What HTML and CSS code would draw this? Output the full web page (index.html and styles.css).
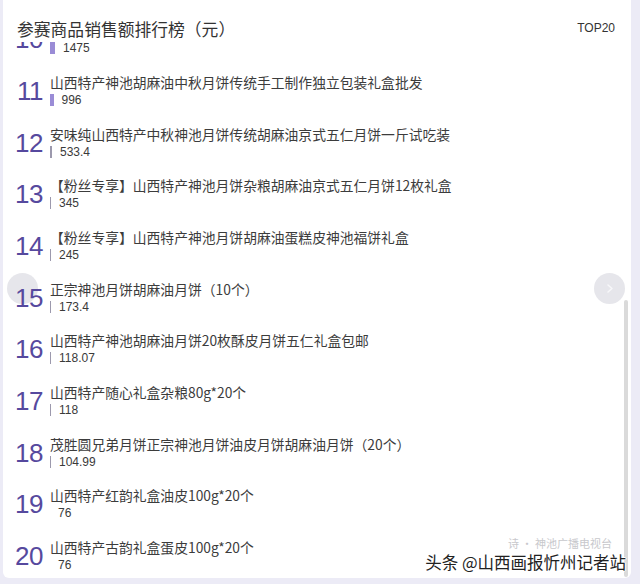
FILE: index.html
```html
<!DOCTYPE html>
<html lang="zh">
<head>
<meta charset="utf-8">
<title>参赛商品销售额排行榜</title>
<link rel="stylesheet" href="styles.css">
</head>
<body>
<div class="card">
  <div class="header">
    <div class="title">参赛商品销售额排行榜（元）</div>
    <div class="top">TOP20</div>
  </div>

  <div class="nav nav-left"></div>

  <div class="list">
    <div class="row"><div class="rank">10</div><div class="info"><div class="name">山西特产神池月饼胡麻油传统手工制作礼盒装</div><div class="val"><span class="bar" style="width:5px"></span>1475</div></div></div>
    <div class="row"><div class="rank">11</div><div class="info"><div class="name">山西特产神池胡麻油中秋月饼传统手工制作独立包装礼盒批发</div><div class="val"><span class="bar" style="width:3.5px"></span>996</div></div></div>
    <div class="row"><div class="rank">12</div><div class="info"><div class="name">安味纯山西特产中秋神池月饼传统胡麻油京式五仁月饼一斤试吃装</div><div class="val"><span class="bar thin" style="width:2px"></span>533.4</div></div></div>
    <div class="row"><div class="rank">13</div><div class="info"><div class="name">【粉丝专享】山西特产神池月饼杂粮胡麻油京式五仁月饼12枚礼盒</div><div class="val"><span class="bar thin" style="width:1px"></span>345</div></div></div>
    <div class="row"><div class="rank">14</div><div class="info"><div class="name">【粉丝专享】山西特产神池月饼胡麻油蛋糕皮神池福饼礼盒</div><div class="val"><span class="bar thin" style="width:1px"></span>245</div></div></div>
    <div class="row"><div class="rank">15</div><div class="info"><div class="name">正宗神池月饼胡麻油月饼（10个）</div><div class="val"><span class="bar thin" style="width:1px"></span>173.4</div></div></div>
    <div class="row"><div class="rank">16</div><div class="info"><div class="name">山西特产神池胡麻油月饼20枚酥皮月饼五仁礼盒包邮</div><div class="val"><span class="bar thin" style="width:1px"></span>118.07</div></div></div>
    <div class="row"><div class="rank">17</div><div class="info"><div class="name">山西特产随心礼盒杂粮80g*20个</div><div class="val"><span class="bar thin" style="width:1px"></span>118</div></div></div>
    <div class="row"><div class="rank">18</div><div class="info"><div class="name">茂胜圆兄弟月饼正宗神池月饼油皮月饼胡麻油月饼（20个）</div><div class="val"><span class="bar thin" style="width:1px"></span>104.99</div></div></div>
    <div class="row"><div class="rank">19</div><div class="info"><div class="name">山西特产红韵礼盒油皮100g*20个</div><div class="val"><span class="bar" style="width:0"></span>76</div></div></div>
    <div class="row"><div class="rank">20</div><div class="info"><div class="name">山西特产古韵礼盒蛋皮100g*20个</div><div class="val"><span class="bar" style="width:0"></span>76</div></div></div>
  </div>

  <div class="nav nav-right">
    <svg width="31" height="31" viewBox="0 0 31 31"><path d="M14 12 L18 15.5 L14 19" fill="none" stroke="#f7f7f9" stroke-width="1.6" stroke-linecap="round" stroke-linejoin="round"/></svg>
  </div>

  <div class="thumb"></div>

  <div class="mark">
    <span class="mark-faint">诗 · 神池广播电视台</span>
    <span class="mark-main">头条 @山西画报忻州记者站</span>
  </div>
</div>
</body>
</html>
```

FILE: styles.css
```css
html, body {
  margin: 0;
  padding: 0;
}

body {
  background: #ecebf6;
  width: 640px;
  height: 584px;
  overflow: hidden;
  font-family: "Noto Sans CJK SC", "Liberation Sans", sans-serif;
  color: #333;
}

.card {
  position: relative;
  margin-left: 3px;
  width: 628px;
  height: 578px;
  background: #fff;
  border-radius: 0 0 6px 6px;
  overflow: hidden;
}

.header {
  position: absolute;
  left: 0;
  top: 0;
  right: 0;
  height: 42px;
  background: #fff;
  z-index: 3;
  display: flex;
  justify-content: space-between;
  align-items: center;
  box-sizing: border-box;
  padding: 16px 16px 0 14px;
}

.title {
  font-size: 16.8px;
  line-height: 22px;
  color: #333;
}

.top {
  font-family: "Liberation Sans", sans-serif;
  font-size: 12px;
  color: #333;
  margin-top: -3px;
}

.list {
  position: relative;
  z-index: 1;
  padding-top: 21.3px;
}

.row {
  display: flex;
  align-items: center;
  height: 36px;
  margin-bottom: 15.67px;
  padding-left: 7px;
}

.rank {
  width: 33px;
  text-align: right;
  font-family: "Liberation Sans", sans-serif;
  font-size: 26px;
  line-height: 1;
  color: #56499e;
  letter-spacing: -0.5px;
  margin-right: 7px;
}

.info {
  display: flex;
  flex-direction: column;
}

.name {
  font-size: 13.8px;
  line-height: 18px;
  color: #3c3c3c;
  white-space: nowrap;
}

.val {
  display: flex;
  align-items: center;
  height: 18px;
  font-family: "Liberation Sans", sans-serif;
  font-size: 12px;
  color: #3a3a3a;
}

.bar {
  display: inline-block;
  height: 12px;
  background: #9a8cd6;
  margin-right: 8px;
}

.bar.thin {
  background: #9c99ad;
}

.nav {
  position: absolute;
  top: 273px;
  width: 31px;
  height: 31px;
  border-radius: 50%;
  background: #e6e6eb;
}

.nav-left {
  left: 4px;
  z-index: 0;
}

.nav-right {
  left: 591px;
  z-index: 2;
}

.nav svg {
  display: block;
}

.thumb {
  position: absolute;
  left: 621px;
  top: 300px;
  bottom: 1px;
  width: 4px;
  border-radius: 2px;
  background: #dadada;
  z-index: 2;
}

.mark {
  position: absolute;
  right: 5px;
  bottom: 6px;
  z-index: 4;
  height: 40px;
  width: 210px;
}

.mark-faint {
  position: absolute;
  right: 14px;
  top: 3px;
  font-size: 11px;
  color: #c8c8cc;
  white-space: nowrap;
}

.mark-main {
  position: absolute;
  right: 0;
  bottom: 0;
  font-size: 16.5px;
  line-height: 20px;
  color: #222;
  white-space: nowrap;
  text-shadow: 1px 0 0 #fff, -1px 0 0 #fff, 0 1px 0 #fff, 0 -1px 0 #fff;
}
```
